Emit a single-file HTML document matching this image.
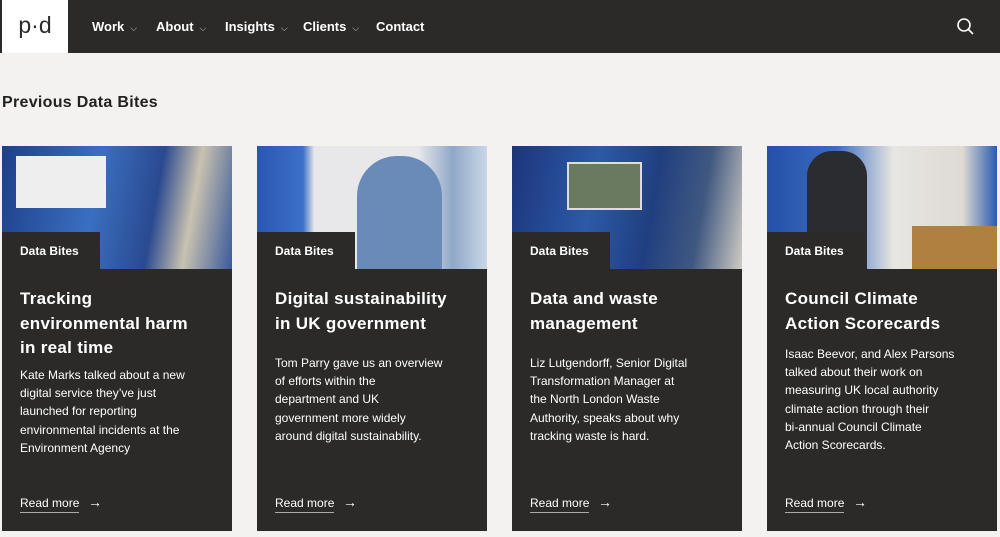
<!DOCTYPE html>
<html><head><meta charset="utf-8"><style>
*{margin:0;padding:0;box-sizing:border-box}
body{width:1000px;height:537px;background:#f3f2f0;font-family:"Liberation Sans",sans-serif;overflow:hidden;position:relative}
.hdr{position:absolute;left:0;top:0;width:1000px;height:53px;background:#2b2a29}
.logo{position:absolute;left:2px;top:0;width:66px;height:53px;background:#fff;font-size:23px;color:#2b2a29;text-align:center;line-height:50px}
.nav{position:absolute;top:19px;color:#fff;font-size:13px;font-weight:bold}
.nav span{font-weight:normal;font-size:9px;margin-left:6px;color:#ccc}
h2{position:absolute;left:2px;top:94px;font-size:16px;font-weight:bold;color:#222;letter-spacing:0.3px}
.card{position:absolute;top:146px;width:230px;height:385px;background:#2b2a29;color:#fff}
.img{height:123px;position:relative;overflow:hidden}
.tab{position:absolute;left:0;top:86px;height:37px;width:98px;background:#2b2a29;font-size:12px;font-weight:bold;padding:12px 0 0 18px}
.t{position:absolute;left:18px;font-size:17px;font-weight:bold;line-height:24.5px;width:215px;white-space:nowrap;letter-spacing:0.3px}
.d{position:absolute;left:18px;font-size:12px;line-height:18.2px;width:215px;white-space:nowrap}
.r{position:absolute;left:18px;top:350px;font-size:12px;border-bottom:1px solid #aaa;padding-bottom:2px}
.ar{position:absolute;left:86px;top:348px;font-size:14px}
</style></head><body>
<div class="hdr">
<div class="logo">p·d</div>
<div class="nav" style="left:92px">Work<span>⌵</span></div>
<div class="nav" style="left:156px">About<span>⌵</span></div>
<div class="nav" style="left:225px">Insights<span>⌵</span></div>
<div class="nav" style="left:303px">Clients<span>⌵</span></div>
<div class="nav" style="left:376px">Contact</div>
<svg style="position:absolute;left:956px;top:17px" width="19" height="19" viewBox="0 0 19 19"><circle cx="8" cy="8" r="6" fill="none" stroke="#fff" stroke-width="1.6"/><line x1="12.5" y1="12.5" x2="17" y2="17" stroke="#fff" stroke-width="1.6"/></svg>
</div>
<h2>Previous Data Bites</h2>

<div class="card" style="left:2px"><div class="img" style="background:linear-gradient(100deg,#1e3f8a 0%,#3a6fc0 40%,#2a4a90 65%,#c9c2b0 80%,#3a5a9a 100%)"><div style="position:absolute;left:14px;top:10px;width:90px;height:52px;background:#eee"></div><div class="tab">Data Bites</div></div>
<div class="t" style="top:141px">Tracking<br>environmental harm<br>in real time</div>
<div class="d" style="top:220px">Kate Marks talked about a new<br>digital service they’ve just<br>launched for reporting<br>environmental incidents at the<br>Environment Agency</div>
<div class="r">Read more</div><div class="ar">→</div></div>

<div class="card" style="left:257px"><div class="img" style="background:linear-gradient(90deg,#2a56b0 0%,#3c70c8 20%,#e8e8ea 25%,#e8e8ea 70%,#8fa8c8 85%,#c8d8e8 100%)"><div style="position:absolute;left:100px;top:10px;width:85px;height:113px;background:#6a8ab8;border-radius:40px 40px 0 0"></div><div class="tab">Data Bites</div></div>
<div class="t" style="top:141px">Digital sustainability<br>in UK government</div>
<div class="d" style="top:208px">Tom Parry gave us an overview<br>of efforts within the<br>department and UK<br>government more widely<br>around digital sustainability.</div>
<div class="r">Read more</div><div class="ar">→</div></div>

<div class="card" style="left:512px"><div class="img" style="background:linear-gradient(100deg,#1c357a 0%,#2c5aa8 35%,#203f80 60%,#405880 80%,#d0ccc4 100%)"><div style="position:absolute;left:55px;top:16px;width:75px;height:48px;background:#6a7a60;border:2px solid #ddd"></div><div class="tab">Data Bites</div></div>
<div class="t" style="top:141px">Data and waste<br>management</div>
<div class="d" style="top:208px">Liz Lutgendorff, Senior Digital<br>Transformation Manager at<br>the North London Waste<br>Authority, speaks about why<br>tracking waste is hard.</div>
<div class="r">Read more</div><div class="ar">→</div></div>

<div class="card" style="left:767px"><div class="img" style="background:linear-gradient(90deg,#2450a8 0%,#3a6cc0 30%,#e8e6e2 55%,#dedad4 85%,#2a5ab0 100%)"><div style="position:absolute;left:40px;top:5px;width:60px;height:118px;background:#2a2c30;border-radius:25px 25px 0 0"></div><div style="position:absolute;left:145px;top:80px;width:85px;height:43px;background:#b08040"></div><div class="tab">Data Bites</div></div>
<div class="t" style="top:141px">Council Climate<br>Action Scorecards</div>
<div class="d" style="top:199px">Isaac Beevor, and Alex Parsons<br>talked about their work on<br>measuring UK local authority<br>climate action through their<br>bi-annual Council Climate<br>Action Scorecards.</div>
<div class="r">Read more</div><div class="ar">→</div></div>
</body></html>
